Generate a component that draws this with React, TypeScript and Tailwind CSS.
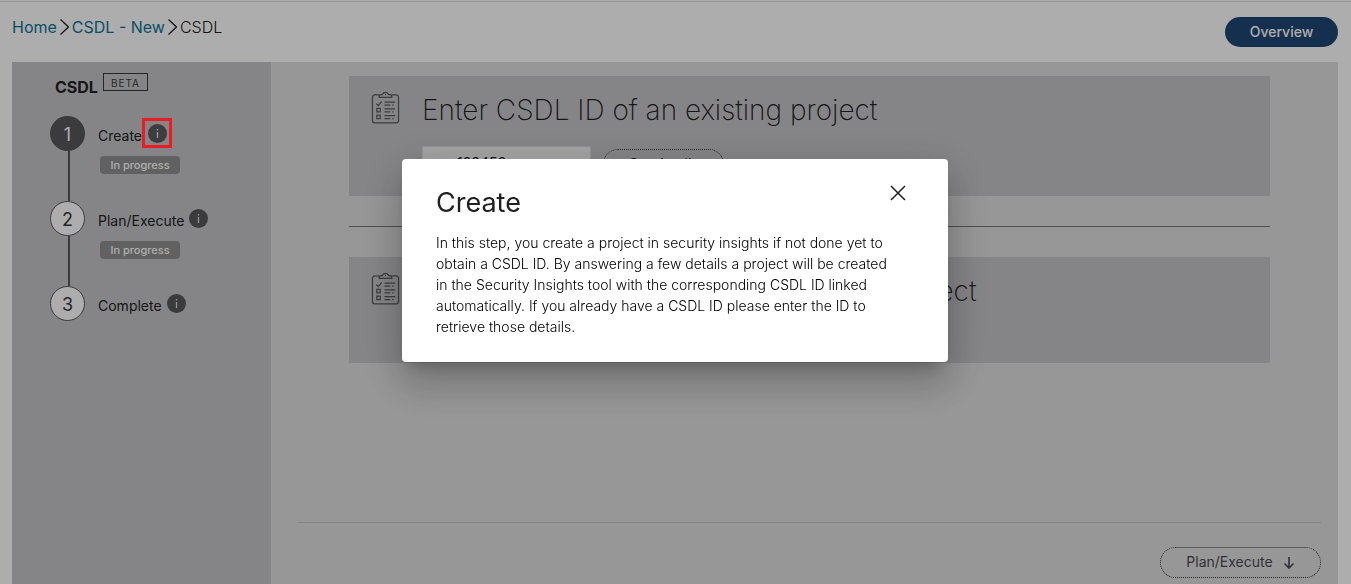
import React from "react";

function ClipboardIcon() {
  return (
    <svg width="29" height="33" viewBox="0 0 30 34" fill="none" stroke="#5a5a5f" strokeWidth="1.3" aria-hidden="true" className="shrink-0">
      <path d="M8 4H4a2.5 2.5 0 0 0-2.500 2.500V30.500A2.500 2.500 0 0 0 4 33H26a2.500 2.500 0 0 0 2.500-2.500V6.500A2.500 2.500 0 0 0 26 4H22" />
      <path d="M8.500 6.500V4.200L12 3.500C12.600 0.700 17.400 0.700 18 3.500L21.500 4.200V6.500Z" />
      <path d="M14.500 3.500h1" />
      <path d="M5.500 13l2 2 3.500-4M6 18h3.500v3.500H6ZM6 25h3.500v3.500H6Z" />
      <path d="M14 11.500h11M14 14.500h6M22 14.500h1.500M14 18.500h11M14 21.500h6M22 21.500h1.500M14 25.500h11M14 28.500h6M22 28.500h1.500" />
    </svg>
  );
}

function InfoButton({ label, highlighted = false }: { label: string; highlighted?: boolean }) {
  return (
    <button
      type="button"
      aria-label={label}
      className={
        highlighted
          ? "relative z-50 flex size-[30px] items-center justify-center border-3 border-[#ed1c24]"
          : "ml-[5px] flex h-[30px] items-center"
      }
    >
      <svg width="19" height="19" viewBox="0 0 19 19" aria-hidden="true">
        <circle cx="9.500" cy="9.500" r="9.500" fill={highlighted ? "#3d3d3f" : "#58585b"} />
        <path d="M9.500 5v1.500M9.500 8v6" stroke={highlighted ? "#9c9c9c" : "#d8d8d8"} strokeWidth="1.300" />
      </svg>
    </button>
  );
}

type Step = { title: string; status?: string; active?: boolean };

const steps: Step[] = [
  { title: "Create", status: "In progress", active: true },
  { title: "Plan/Execute", status: "In progress" },
  { title: "Complete" },
];

function Stepper() {
  return (
    <ol className="mt-[17px] pl-[38px]">
      {steps.map((step, i) => (
        <li key={step.title} className="flex h-[85px] gap-[13px]">
          <div className="flex w-[35px] flex-col items-center">
            <span
              className={
                step.active
                  ? "flex size-[35px] shrink-0 items-center justify-center rounded-full bg-[#58585b] pt-0.5 text-lg text-white"
                  : "flex size-[35px] shrink-0 items-center justify-center rounded-full border border-[#58585b] bg-white pt-0.5 text-lg text-[#39393b]"
              }
            >
              {i + 1}
            </span>
            {i < steps.length - 1 && <span className="ml-0.5 w-0.5 grow bg-[#58585b]" />}
          </div>
          <div>
            <div className="flex h-[34px] items-center">
              <span className="pt-1.5 text-sm text-[#212121]">{step.title}</span>
              <InfoButton label={`About ${step.title}`} highlighted={step.active} />
            </div>
            {step.status && (
              <span className="mt-1.5 ml-0.5 flex h-[18px] w-20 items-center justify-center rounded bg-[#8f8f8f] text-[11px] font-medium text-white">
                {step.status}
              </span>
            )}
          </div>
        </li>
      ))}
    </ol>
  );
}

function Chevron() {
  return (
    <svg width="9" height="18" viewBox="0 0 9 18" fill="none" stroke="#212121" strokeWidth="1.300" aria-hidden="true" className="mx-[3px]">
      <path d="M0.500 1.500l8 7.500-8 7.500" />
    </svg>
  );
}

function Dialog() {
  return (
    <div className="fixed inset-0 z-40 flex items-start justify-center bg-black/32 pt-[159px] pr-[17px] pl-4">
      <section
        role="dialog"
        aria-modal="true"
        aria-labelledby="dialog-title"
        className="w-full max-w-[546px] rounded bg-white px-[34px] pt-6 pb-[25px] text-[#212121] shadow-[0_11px_15px_-7px_rgba(0,0,0,0.2),0_24px_38px_3px_rgba(0,0,0,0.14),0_9px_46px_8px_rgba(0,0,0,0.12)]"
      >
        <div className="flex items-start justify-between">
          <h2 id="dialog-title" className="text-[27px] leading-10">Create</h2>
          <button type="button" aria-label="Close" className="mr-1.5 flex size-5 items-center justify-center">
            <svg width="16" height="16" viewBox="0 0 16 16" stroke="#212121" strokeWidth="1.500" aria-hidden="true">
              <path d="M1 1l14 14M15 1L1 15" />
            </svg>
          </button>
        </div>
        <p className="mt-[9px] pr-3 text-sm leading-[21px] font-light text-black">
          In this step, you create a project in security insights if not done yet to obtain a CSDL ID. By answering a few
          details a project will be created in the Security Insights tool with the corresponding CSDL ID linked
          automatically. If you already have a CSDL ID please enter the ID to retrieve those details.
        </p>
      </section>
    </div>
  );
}

export default function App() {
  return (
    <div className="flex h-screen flex-col overflow-hidden bg-white pr-[13px] pl-3 font-['Inter','Liberation_Sans',sans-serif] text-[#212121]">
      <div className="-mr-[13px] -ml-3 mt-px h-px shrink-0 bg-[#dcdcdc]" />
      <header className="flex h-[60px] shrink-0 items-start justify-between">
        <nav aria-label="Breadcrumb" className="mt-[13px] flex items-center text-base leading-6">
          <a href="#home" className="text-[#0d7597]">Home</a>
          <Chevron />
          <a href="#new" className="text-[#0d7597]">CSDL - New</a>
          <Chevron />
          <span className="font-light">CSDL</span>
        </nav>
        <button type="button" className="mt-[15px] h-[30px] w-[113px] rounded-full bg-[#204774] text-sm font-medium text-white">
          Overview
        </button>
      </header>
      <div className="flex min-h-0 grow bg-[#dfdfdf]">
        <aside className="w-[259px] shrink-0 bg-[#c5c5c8]">
          <div className="flex items-start gap-[5px] pt-[11px] pl-[43px]">
            <h1 className="pt-0.5 text-base leading-6 font-bold">CSDL</h1>
            <span className="flex h-[18px] w-[45px] items-center justify-center border border-[#39393b] pt-0.5 text-[10px] tracking-widest text-[#39393b]">
              BETA
            </span>
          </div>
          <Stepper />
        </aside>
        <main className="flex grow flex-col pr-[17px] pl-[27px]">
          <div className="mr-[51px] ml-[51px] pt-3.5">
            <section className="flex h-[120px] gap-[22px] bg-[#c5c5c8] pt-[15px] pl-[22px]">
              <ClipboardIcon />
              <div>
                <h2 className="text-[28px] leading-[38px] font-extralight">Enter CSDL ID of an existing project</h2>
                <div className="mt-[17px] flex gap-3">
                  <input aria-label="CSDL ID" defaultValue="123456" className="h-8 w-[169px] border border-[#d8d8d8] bg-[#f2f2f2] pl-[34px] text-sm" />
                  <button type="button" className="mt-[3px] h-[30px] w-[121px] rounded-full border border-dotted border-[#39393b] text-sm">
                    Get details
                  </button>
                </div>
              </div>
            </section>
            <hr className="mt-[30px] border-[#77777a]" />
            <section className="mt-[30px] flex h-[106px] gap-[22px] bg-[#c5c5c8] pt-[15px] pl-[22px]">
              <ClipboardIcon />
              <h2 className="text-[28px] leading-[38px] font-extralight">Create a CSDL ID by creating a new project</h2>
            </section>
          </div>
          <div className="mt-[159px] flex justify-end border-t border-[#c5c5c8] pt-6">
            <button type="button" className="flex h-[31px] w-[161px] items-center justify-center gap-2.5 rounded-full border border-dotted border-[#39393b] pb-0.5 text-sm text-[#4a4a50]">
              Plan/Execute
              <svg width="12" height="14" viewBox="0 0 12 14" fill="none" stroke="#4a4a50" strokeWidth="1.600" aria-hidden="true" className="mt-0.5">
                <path d="M6 1v11M1.500 7.500L6 12l4.500-4.500" />
              </svg>
            </button>
          </div>
        </main>
      </div>
      <Dialog />
    </div>
  );
}
